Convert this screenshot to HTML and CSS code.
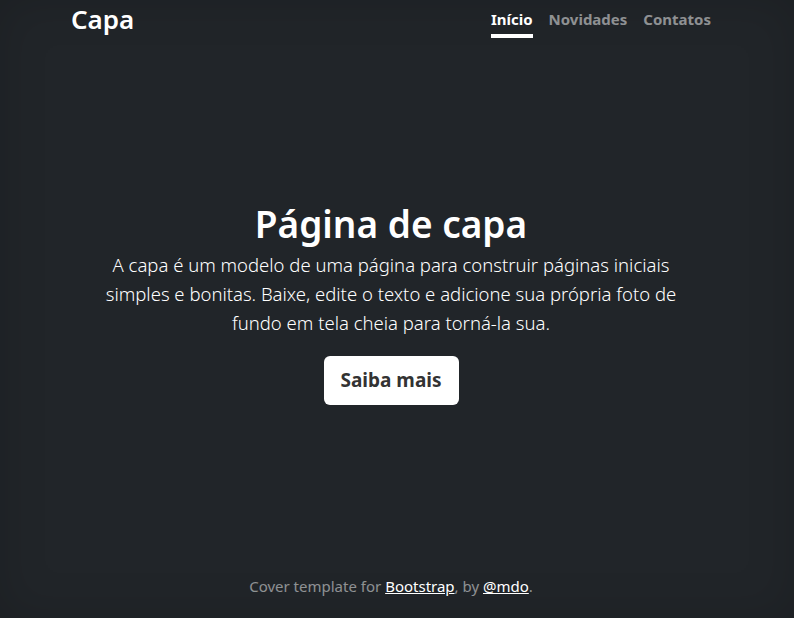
FILE: index.html
```html
<!DOCTYPE html>
<html lang="pt-BR">
<head>
<meta charset="utf-8">
<title>Capa</title>
<link rel="stylesheet" href="styles.css">
</head>
<body>
<div class="cover">
  <header class="masthead">
    <h3 class="brand">Capa</h3>
    <nav class="nav">
      <a class="nav-link active" href="#">Início</a>
      <a class="nav-link" href="#">Novidades</a>
      <a class="nav-link" href="#">Contatos</a>
    </nav>
  </header>
  <main class="hero">
    <h1 class="title">Página de capa</h1>
    <p class="lead">A capa é um modelo de uma página para construir páginas iniciais<br>simples e bonitas. Baixe, edite o texto e adicione sua própria foto de<br>fundo em tela cheia para torná-la sua.</p>
    <a class="btn" href="#">Saiba mais</a>
  </main>
  <footer class="foot">
    <p>Cover template for <a href="#">Bootstrap</a>, by <a href="#">@mdo</a>.</p>
  </footer>
</div>
</body>
</html>
```
FILE: styles.css
```css
html, body {
  height: 100%;
}
body {
  margin: 0;
  background: #212529;
  box-shadow: inset 0 0 3rem rgba(0, 0, 0, .15);
  color: #fff;
  font-family: "Noto Sans", "Open Sans", sans-serif;
  font-size: 16px;
  line-height: 1.5;
}
.cover {
  box-sizing: border-box;
  height: 100%;
  width: 640px;
  margin: 0 auto;
  position: relative;
  left: -6px;
  display: flex;
  flex-direction: column;
}
.masthead {
  display: flex;
  justify-content: space-between;
  align-items: flex-start;
}
.brand {
  margin: 4px 0 0;
  font-size: 26px;
  font-weight: 600;
  line-height: 1.2;
}
.nav {
  display: flex;
  gap: 16px;
  padding-top: 6px;
}
.nav-link {
  color: rgba(255, 255, 255, .5);
  font-weight: 700;
  font-size: 15px;
  text-decoration: none;
  padding: 2px 0 3px;
  border-bottom: 4px solid transparent;
}
.nav-link.active {
  color: #fff;
  border-bottom-color: #fff;
}
.hero {
  margin: auto 0;
  padding-bottom: 6px;
  display: flex;
  flex-direction: column;
  align-items: center;
  text-align: center;
}
.title {
  margin: 0 0 4px;
  font-size: 37px;
  font-weight: 600;
  line-height: 1.2;
}
.lead {
  margin: 0 0 19px;
  font-size: 18.5px;
  font-weight: 300;
  line-height: 29px;
}
.btn {
  display: inline-block;
  background: #fff;
  color: #333;
  font-size: 19px;
  font-weight: 700;
  line-height: 1.5;
  padding: 10px 17px;
  border-radius: 6px;
  text-decoration: none;
}
.foot {
  text-align: center;
  color: rgba(255, 255, 255, .5);
  padding-bottom: 20px;
}
.foot p {
  margin: 0;
  font-size: 15px;
}
.foot a {
  color: #fff;
}
```
